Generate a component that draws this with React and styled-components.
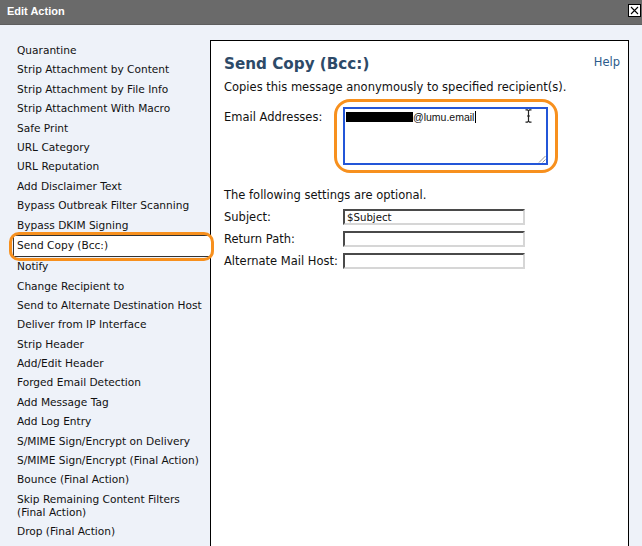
import React from "react";
import styled, { createGlobalStyle } from "styled-components";

const actions = [
  "Quarantine",
  "Strip Attachment by Content",
  "Strip Attachment by File Info",
  "Strip Attachment With Macro",
  "Safe Print",
  "URL Category",
  "URL Reputation",
  "Add Disclaimer Text",
  "Bypass Outbreak Filter Scanning",
  "Bypass DKIM Signing",
  "Send Copy (Bcc:)",
  "Notify",
  "Change Recipient to",
  "Send to Alternate Destination Host",
  "Deliver from IP Interface",
  "Strip Header",
  "Add/Edit Header",
  "Forged Email Detection",
  "Add Message Tag",
  "Add Log Entry",
  "S/MIME Sign/Encrypt on Delivery",
  "S/MIME Sign/Encrypt (Final Action)",
  "Bounce (Final Action)",
  "Skip Remaining Content Filters (Final Action)",
  "Drop (Final Action)",
];

const SELECTED = "Send Copy (Bcc:)";

function CloseIcon() {
  return (
    <svg width="13" height="13" viewBox="0 0 13 13">
      <rect x="0.5" y="0.5" width="12" height="12" fill="#fff" stroke="#000" />
      <path d="M3 3 L10 10 M10 3 L3 10" stroke="#000" strokeWidth="1.1" />
    </svg>
  );
}

function IBeam() {
  return (
    <svg width="7" height="14" viewBox="0 0 7 14">
      <path
        d="M0.5 0.8 H2.5 L3.5 1.8 L4.5 0.8 H6.5 M3.5 1.8 V12.2 M0.5 13.2 H2.5 L3.5 12.2 L4.5 13.2 H6.5 M2 7 H5"
        stroke="#222"
        strokeWidth="1.2"
        fill="none"
      />
    </svg>
  );
}

function Grip() {
  return (
    <svg width="8" height="8" viewBox="0 0 8 8">
      <path d="M7.5 1 L1 7.5 M7.5 4.5 L4.5 7.5" stroke="#999" strokeWidth="1" />
    </svg>
  );
}

export default function App() {
  return (
    <>
      <GlobalStyle />
      <Dialog>
        <TitleBar>
          <Title>Edit Action</Title>
          <CloseButton aria-label="Close">
            <CloseIcon />
          </CloseButton>
        </TitleBar>
        <Body>
          <Sidebar>
            {actions.map((a) => (
              <Item key={a} selected={a === SELECTED}>
                {a}
                {a === SELECTED && <SideMark />}
              </Item>
            ))}
          </Sidebar>
          <Panel>
            <HeaderRow>
              <Heading>Send Copy (Bcc:)</Heading>
              <Help href="#">Help</Help>
            </HeaderRow>
            <Description>
              Copies this message anonymously to specified recipient(s).
            </Description>
            <EmailRow>
              <EmailLabel>Email Addresses:</EmailLabel>
              <AreaWrap>
                <TextArea>
                  <Redacted />
                  @lumu.email
                  <Caret />
                  <Cursor>
                    <IBeam />
                  </Cursor>
                  <GripSpot>
                    <Grip />
                  </GripSpot>
                </TextArea>
                <AreaMark />
              </AreaWrap>
            </EmailRow>
            <Optional>The following settings are optional.</Optional>
            <Fields>
              <FieldRow>
                <FieldLabel>Subject:</FieldLabel>
                <Input defaultValue="$Subject" />
              </FieldRow>
              <FieldRow>
                <FieldLabel>Return Path:</FieldLabel>
                <Input defaultValue="" />
              </FieldRow>
              <FieldRow>
                <FieldLabel>Alternate Mail Host:</FieldLabel>
                <Input defaultValue="" />
              </FieldRow>
            </Fields>
          </Panel>
        </Body>
      </Dialog>
    </>
  );
}

const GlobalStyle = createGlobalStyle`
  html, body {
    margin: 0;
    padding: 0;
    background: #eef2f9;
    font-family: "DejaVu Sans", Verdana, sans-serif;
    font-size: 10.6px;
    color: #111;
  }
`;

const Dialog = styled.div`
  display: flex;
  flex-direction: column;
  width: 642px;
  height: 546px;
  overflow: hidden;
`;

const TitleBar = styled.div`
  display: flex;
  align-items: center;
  justify-content: space-between;
  height: 25px;
  padding: 0 1px 2px 7px;
  box-sizing: border-box;
  background: #6a6a6a;
  border-bottom: 1px solid #5e5e5e;
`;

const Title = styled.span`
  font-family: "Liberation Sans", Arial, sans-serif;
  font-weight: bold;
  font-size: 11px;
  color: #fff;
`;

const CloseButton = styled.button`
  display: flex;
  padding: 0;
  border: 0;
  background: none;
  margin-top: -1px;
`;

const Body = styled.div`
  display: flex;
  flex: 1;
  padding-top: 15px;
  min-height: 0;
`;

const Sidebar = styled.div`
  width: 210px;
  flex-shrink: 0;
  padding: 1px 0 0 14px;
  box-sizing: border-box;
  position: relative;
  z-index: 1;
`;

const Item = styled.div`
  position: relative;
  line-height: 13.2px;
  padding: ${(p) => (p.selected ? "3.5px 4px 3.5px 3px" : "3px 4px 3.2px 3px")};
  margin-right: ${(p) => (p.selected ? "-1px" : "0")};
  margin-left: ${(p) => (p.selected ? "-1px" : "0")};
  background: ${(p) => (p.selected ? "#fff" : "transparent")};
  border-style: solid;
  border-color: #333;
  border-width: ${(p) => (p.selected ? "1px 0 1px 1px" : "0")};
`;

const SideMark = styled.span`
  position: absolute;
  left: -5px;
  right: -3px;
  top: -4px;
  bottom: -5px;
  border: 3px solid #f7901e;
  border-radius: 10px;
  pointer-events: none;
`;

const Panel = styled.div`
  flex: 1;
  margin-right: 13px;
  background: #fff;
  border: 1px solid #000;
  border-bottom: 0;
  padding: 14px 8px 0 13px;
  font-size: 11.5px;
`;

const HeaderRow = styled.div`
  display: flex;
  justify-content: space-between;
  align-items: flex-start;
`;

const Heading = styled.h2`
  margin: 0;
  font-size: 15.2px;
  line-height: 18px;
  font-weight: bold;
  color: #2d4a68;
`;

const Help = styled.a`
  font-size: 11.5px;
  line-height: 14px;
  margin-top: 0;
  color: #2b5b8c;
  text-decoration: none;
`;

const Description = styled.p`
  margin: 7px 0 0;
  line-height: 14px;
`;

const EmailRow = styled.div`
  display: flex;
  align-items: flex-start;
  margin-top: 13px;
`;

const EmailLabel = styled.span`
  width: 119px;
  flex-shrink: 0;
  padding-top: 3px;
  line-height: 14px;
`;

const AreaWrap = styled.div`
  position: relative;
`;

const TextArea = styled.div`
  position: relative;
  width: 205px;
  height: 58px;
  box-sizing: border-box;
  border: 2px solid #2356d8;
  padding: 2px 1px;
  font-family: "Liberation Sans", Arial, sans-serif;
  font-size: 10.5px;
  line-height: 12px;
  display: flex;
  align-items: flex-start;
  background: #fff;
`;

const Redacted = styled.span`
  display: inline-block;
  width: 67px;
  height: 10px;
  margin-top: 1px;
  background: #000;
`;

const Caret = styled.span`
  display: inline-block;
  width: 1px;
  height: 12px;
  margin-left: 1px;
  background: #000;
`;

const Cursor = styled.span`
  position: absolute;
  left: 180px;
  top: 0px;
  display: flex;
`;

const GripSpot = styled.span`
  position: absolute;
  right: 0;
  bottom: 0;
  display: flex;
`;

const AreaMark = styled.span`
  position: absolute;
  left: -9px;
  right: -10px;
  top: -8px;
  bottom: -8px;
  border: 3px solid #f7901e;
  border-radius: 16px;
  pointer-events: none;
`;

const Optional = styled.p`
  margin: 23px 0 0;
  line-height: 14px;
`;

const Fields = styled.div`
  display: flex;
  flex-direction: column;
  gap: 6px;
  margin-top: 7px;
`;

const FieldRow = styled.div`
  display: flex;
  align-items: center;
  height: 16px;
`;

const FieldLabel = styled.span`
  width: 119px;
  flex-shrink: 0;
`;

const Input = styled.input`
  width: 182px;
  height: 16px;
  box-sizing: border-box;
  margin: 0;
  padding: 0 2px;
  font-family: "DejaVu Sans", Verdana, sans-serif;
  font-size: 10.2px;
  color: #111;
  background: #fff;
  border-top: 2px solid #4a4a4a;
  border-left: 2px solid #4a4a4a;
  border-bottom: 2px solid #d6d6d6;
  border-right: 2px solid #d6d6d6;
  outline: none;
`;
